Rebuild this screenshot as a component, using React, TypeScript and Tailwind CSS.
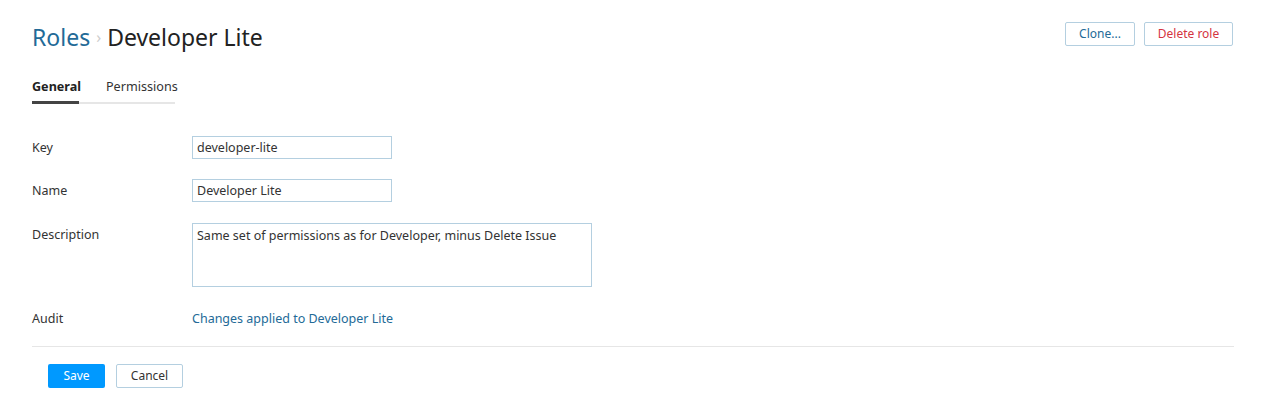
import React from "react";

export default function App() {
  const font = { fontFamily: '"Noto Sans", "Open Sans", sans-serif' };
  return (
    <div className="w-[1266px] h-[413px] bg-white text-[#333] text-[12.5px]" style={font}>
      <div className="px-[32px] pt-[20px]">
        <div className="flex items-start justify-between">
          <h1 className="flex items-center text-[23px] leading-[34px] font-normal">
            <span className="text-[#236a97]">Roles</span>
            <span className="mx-[6px] text-[#ccc] text-[16px]">›</span>
            <span className="text-[#222]">Developer Lite</span>
          </h1>
          <div className="flex gap-[9px] mt-[2px] mr-[1px]">
            <button className="h-[24px] w-[70px] border border-[#b4cfe0] rounded-[2px] text-[12px] text-[#236a97]">Clone...</button>
            <button className="h-[24px] w-[89px] border border-[#b4cfe0] rounded-[2px] text-[12px] text-[#d4333f]">Delete role</button>
          </div>
        </div>
        <div className="mt-[24px] flex w-[143px] border-b-2 border-[#e6e6e6]">
          <div className="pb-[4px] mb-[-2px] border-b-[3px] border-[#444] font-bold text-[12.6px] text-[#222] w-[47px] whitespace-nowrap">General</div>
          <div className="pb-[4px] ml-[27px] text-[12.6px] whitespace-nowrap">Permissions</div>
        </div>
        <div className="mt-[33px] flex flex-col">
          <div className="flex items-center h-[22px]">
            <div className="w-[160px]">Key</div>
            <input className="w-[200px] h-[23px] border border-[#b4cfe0] px-[4px] text-[12.5px] text-[#333] outline-none" defaultValue="developer-lite" />
          </div>
          <div className="flex items-center h-[22px] mt-[21px]">
            <div className="w-[160px]">Name</div>
            <input className="w-[200px] h-[23px] border border-[#b4cfe0] px-[4px] text-[12.5px] text-[#333] outline-none" defaultValue="Developer Lite" />
          </div>
          <div className="flex items-start mt-[21px]">
            <div className="w-[160px] pt-[3px]">Description</div>
            <textarea className="w-[400px] h-[64px] border border-[#b4cfe0] px-[4px] py-[3px] text-[12.5px] text-[#333] outline-none resize-none" defaultValue="Same set of permissions as for Developer, minus Delete Issue" />
          </div>
          <div className="flex items-center mt-[23px]">
            <div className="w-[160px]">Audit</div>
            <a className="text-[#236a97]">Changes applied to Developer Lite</a>
          </div>
        </div>
        <div className="mt-[17px] border-t border-[#e6e6e6] w-[1202px]" />
        <div className="flex gap-[11px] ml-[16px] mt-[17px]">
          <button className="h-[24px] w-[57px] rounded-[2px] bg-[#0099ff] text-white text-[12px]">Save</button>
          <button className="h-[24px] w-[67px] rounded-[2px] border border-[#b4cfe0] text-[#333] text-[12px]">Cancel</button>
        </div>
      </div>
    </div>
  );
}
